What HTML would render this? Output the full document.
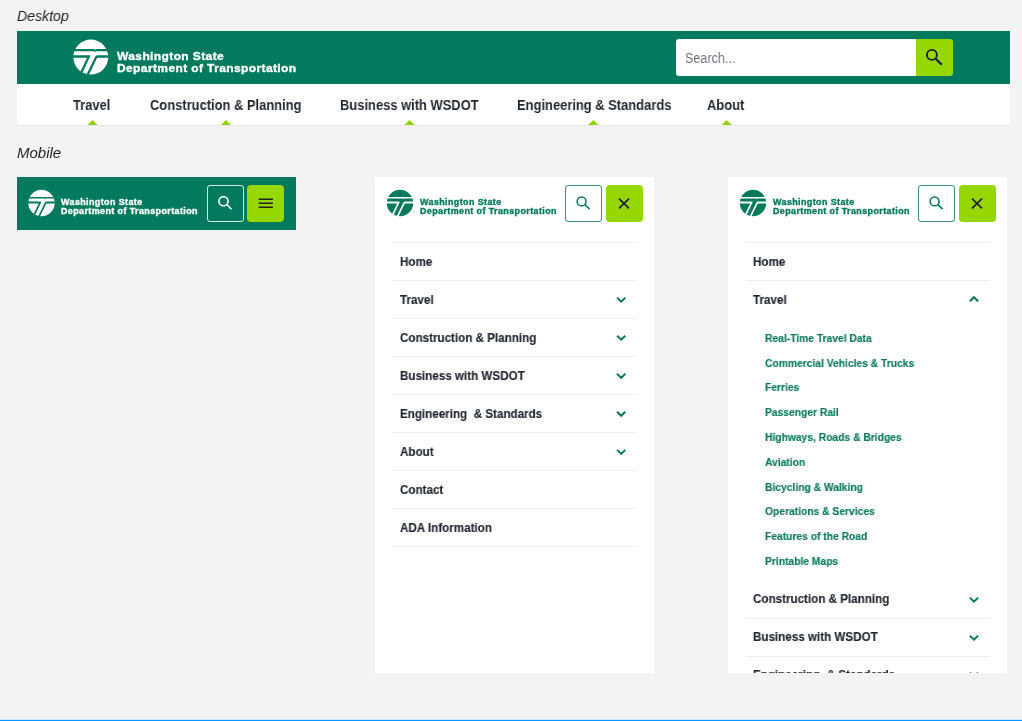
<!DOCTYPE html>
<html><head><meta charset="utf-8">
<style>
*{margin:0;padding:0;box-sizing:border-box}
html,body{width:1022px;height:721px;overflow:hidden;background:#f3f3f3;font-family:"Liberation Sans",sans-serif}
.a{position:absolute}
.t{position:absolute;white-space:nowrap}
svg{position:absolute;overflow:visible}
.t{-webkit-font-smoothing:antialiased;will-change:transform}
</style></head><body>
<div class="t" style="left:17.00px;top:7.80px;font-size:15px;line-height:15px;font-weight:normal;font-style:italic;color:#20252d;letter-spacing:0px;transform:scaleX(0.94);transform-origin:0 0;">Desktop</div>
<div class="a" style="left:17px;top:31px;width:993px;height:53px;background:#037a5e;"></div>
<div class="a" style="left:17px;top:84px;width:993px;height:41px;background:#fff;"></div>
<div class="a" style="left:17px;top:125px;width:993px;height:1px;background:#e6e6e6;"></div>
<svg style="left:71px;top:37px" width="40" height="40" viewBox="-19.800 -20.100 40.000 40.000">
 <circle cx="0" cy="0" r="17.5" fill="#fff"/>
 <g fill="#037a5e">
  <polygon points="-19,-8.1 3.6,-8.1 4.6,-7.3 5.6,-8.1 19,-8.1 19,-5.86 5.6,-5.86 4.6,-5.0 3.6,-5.86 -19,-5.86"/>
  <path d="M-19,-1.94 L-1.0,-1.94 Q-0.05,-1.94 -0.45,-1.1 L-9.89,19 L-12.43,19 L-3.76,0.56 L-19,0.56 Z"/>
  <path d="M19,-1.94 L6.8,-1.94 Q5.03,-1.94 4.3,-0.4 L-5.02,19 L-2.52,19 L6.33,0.56 L19,0.56 Z"/>
 </g>
</svg>
<div class="t" style="left:117.00px;top:50.59px;font-size:11px;line-height:11px;font-weight:bold;font-style:normal;color:#fff;letter-spacing:0.36px;transform:scaleX(1.09);transform-origin:0 0;-webkit-text-stroke:0.35px currentColor;">Washington State</div>
<div class="t" style="left:117.00px;top:63.09px;font-size:11px;line-height:11px;font-weight:bold;font-style:normal;color:#fff;letter-spacing:0.36px;transform:scaleX(1.09);transform-origin:0 0;-webkit-text-stroke:0.35px currentColor;">Department of Transportation</div>
<div class="a" style="left:676px;top:39px;width:240px;height:37px;background:#fff;border-radius:3px 0 0 3px"></div>
<div class="a" style="left:916px;top:39px;width:37px;height:37px;background:#97d700;border-radius:0 3px 3px 0"></div>
<div class="t" style="left:685.00px;top:50.85px;font-size:14px;line-height:14px;font-weight:normal;font-style:normal;color:#6e737a;letter-spacing:0px;transform:scaleX(0.9);transform-origin:0 0;">Search...</div>
<svg style="left:922px;top:45px" width="23" height="23" viewBox="922 45 23 23">
 <circle cx="931.9" cy="54.9" r="5.0" fill="none" stroke="#1d2033" stroke-width="1.9"/>
 <line x1="935.44" y1="58.44" x2="941.8" y2="64.8" stroke="#1d2033" stroke-width="2.3" stroke-linecap="butt"/>
</svg>
<div class="t" style="left:73.30px;top:98.35px;font-size:14px;line-height:14px;font-weight:bold;font-style:normal;color:#1f2630;letter-spacing:0px;transform:scaleX(0.923);transform-origin:0 0;">Travel</div>
<div class="t" style="left:149.80px;top:98.35px;font-size:14px;line-height:14px;font-weight:bold;font-style:normal;color:#1f2630;letter-spacing:0px;transform:scaleX(0.923);transform-origin:0 0;">Construction &amp; Planning</div>
<div class="t" style="left:339.80px;top:98.35px;font-size:14px;line-height:14px;font-weight:bold;font-style:normal;color:#1f2630;letter-spacing:0px;transform:scaleX(0.923);transform-origin:0 0;">Business with WSDOT</div>
<div class="t" style="left:516.70px;top:98.35px;font-size:14px;line-height:14px;font-weight:bold;font-style:normal;color:#1f2630;letter-spacing:0px;transform:scaleX(0.923);transform-origin:0 0;">Engineering &amp; Standards</div>
<div class="t" style="left:706.70px;top:98.35px;font-size:14px;line-height:14px;font-weight:bold;font-style:normal;color:#1f2630;letter-spacing:0px;transform:scaleX(0.923);transform-origin:0 0;">About</div>
<svg style="left:86px;top:119px" width="12" height="7" viewBox="86 119 12 7"><polygon points="87.5,125 92.5,120 97.5,125" fill="#8fd400"/></svg>
<svg style="left:220px;top:119px" width="12" height="7" viewBox="220 119 12 7"><polygon points="221,125 226,120 231,125" fill="#8fd400"/></svg>
<svg style="left:403px;top:119px" width="12" height="7" viewBox="403 119 12 7"><polygon points="404.5,125 409.5,120 414.5,125" fill="#8fd400"/></svg>
<svg style="left:587px;top:119px" width="12" height="7" viewBox="587 119 12 7"><polygon points="588.3,125 593.3,120 598.3,125" fill="#8fd400"/></svg>
<svg style="left:720px;top:119px" width="12" height="7" viewBox="720 119 12 7"><polygon points="721.6,125 726.6,120 731.6,125" fill="#8fd400"/></svg>
<div class="t" style="left:17.00px;top:144.80px;font-size:15px;line-height:15px;font-weight:normal;font-style:italic;color:#20252d;letter-spacing:0px;">Mobile</div>
<div class="a" style="left:17px;top:177px;width:279px;height:53px;background:#037a5e;"></div>
<svg style="left:26px;top:187px" width="31" height="31" viewBox="-20.530 -21.192 41.060 41.060">
 <circle cx="0" cy="0" r="17.5" fill="#fff"/>
 <g fill="#037a5e">
  <polygon points="-19,-8.1 3.6,-8.1 4.6,-7.3 5.6,-8.1 19,-8.1 19,-5.86 5.6,-5.86 4.6,-5.0 3.6,-5.86 -19,-5.86"/>
  <path d="M-19,-1.94 L-1.0,-1.94 Q-0.05,-1.94 -0.45,-1.1 L-9.89,19 L-12.43,19 L-3.76,0.56 L-19,0.56 Z"/>
  <path d="M19,-1.94 L6.8,-1.94 Q5.03,-1.94 4.3,-0.4 L-5.02,19 L-2.52,19 L6.33,0.56 L19,0.56 Z"/>
 </g>
</svg>
<div class="t" style="left:61.20px;top:199.16px;font-size:8.2px;line-height:8.2px;font-weight:bold;font-style:normal;color:#fff;letter-spacing:0.378px;transform:scaleX(1.09);transform-origin:0 0;-webkit-text-stroke:0.35px currentColor;">Washington State</div>
<div class="t" style="left:61.20px;top:207.86px;font-size:8.2px;line-height:8.2px;font-weight:bold;font-style:normal;color:#fff;letter-spacing:0.378px;transform:scaleX(1.09);transform-origin:0 0;-webkit-text-stroke:0.35px currentColor;">Department of Transportation</div>
<div class="a" style="left:207px;top:185px;width:37px;height:37px;background:transparent;border:1px solid rgba(255,255,255,0.85);border-radius:3px"></div>
<svg style="left:214px;top:192px" width="21" height="21" viewBox="214 192 21 21">
 <circle cx="223.5" cy="201.2" r="4.6" fill="none" stroke="#fff" stroke-width="1.6"/>
 <line x1="226.75" y1="204.45" x2="231.5" y2="209.2" stroke="#fff" stroke-width="1.6" stroke-linecap="butt"/>
</svg>
<div class="a" style="left:247px;top:185px;width:37px;height:37px;background:#97d700;border-radius:4px"></div>
<svg style="left:255px;top:195px" width="22" height="16" viewBox="255 195 22 16"><path d="M258.7,199.3H272.9M258.7,203.3H272.9M258.7,207.2H272.9" stroke="#222" stroke-width="1.5" fill="none"/></svg>
<div class="a" style="left:375px;top:177px;width:279.4px;height:496px;background:#fff;"></div>
<svg style="left:384px;top:187px" width="31" height="31" viewBox="-21.192 -21.192 41.060 41.060">
 <circle cx="0" cy="0" r="17.5" fill="#037a5e"/>
 <g fill="#fff">
  <polygon points="-19,-8.1 3.6,-8.1 4.6,-7.3 5.6,-8.1 19,-8.1 19,-5.86 5.6,-5.86 4.6,-5.0 3.6,-5.86 -19,-5.86"/>
  <path d="M-19,-1.94 L-1.0,-1.94 Q-0.05,-1.94 -0.45,-1.1 L-9.89,19 L-12.43,19 L-3.76,0.56 L-19,0.56 Z"/>
  <path d="M19,-1.94 L6.8,-1.94 Q5.03,-1.94 4.3,-0.4 L-5.02,19 L-2.52,19 L6.33,0.56 L19,0.56 Z"/>
 </g>
</svg>
<div class="t" style="left:419.50px;top:199.16px;font-size:8.2px;line-height:8.2px;font-weight:bold;font-style:normal;color:#037a5e;letter-spacing:0.378px;transform:scaleX(1.09);transform-origin:0 0;-webkit-text-stroke:0.35px currentColor;">Washington State</div>
<div class="t" style="left:419.50px;top:207.86px;font-size:8.2px;line-height:8.2px;font-weight:bold;font-style:normal;color:#037a5e;letter-spacing:0.378px;transform:scaleX(1.09);transform-origin:0 0;-webkit-text-stroke:0.35px currentColor;">Department of Transportation</div>
<div class="a" style="left:565px;top:185px;width:37px;height:37px;background:transparent;border:1px solid rgba(3,122,94,0.8);border-radius:3px"></div>
<svg style="left:573px;top:193px" width="20" height="20" viewBox="573 193 20 20">
 <circle cx="581.6" cy="201.4" r="4.4" fill="none" stroke="#037a5e" stroke-width="1.6"/>
 <line x1="584.71" y1="204.51" x2="589.7" y2="209.1" stroke="#037a5e" stroke-width="1.6" stroke-linecap="butt"/>
</svg>
<div class="a" style="left:605.5px;top:185px;width:37.5px;height:37px;background:#97d700;border-radius:4px"></div>
<svg style="left:615px;top:194px" width="20" height="20" viewBox="615 194 20 20"><path d="M619,198.6 L629,208.3 M629,198.6 L619,208.3" stroke="#1d2033" stroke-width="1.7" fill="none"/></svg>
<div class="a" style="left:393px;top:242px;width:243.5px;height:1px;background:#efefef;"></div>
<div class="t" style="left:399.60px;top:255.62px;font-size:12.5px;line-height:12.5px;font-weight:bold;font-style:normal;color:#1f2630;letter-spacing:0px;transform:scaleX(0.93);transform-origin:0 0;-webkit-text-stroke:0.15px currentColor;">Home</div>
<div class="a" style="left:393px;top:280px;width:243.5px;height:1px;background:#efefef;"></div>
<div class="t" style="left:399.60px;top:293.67px;font-size:12.5px;line-height:12.5px;font-weight:bold;font-style:normal;color:#1f2630;letter-spacing:0px;transform:scaleX(0.93);transform-origin:0 0;-webkit-text-stroke:0.15px currentColor;">Travel</div>
<svg style="left:614px;top:294px" width="14" height="10" viewBox="614 294 14 10"><polyline points="617.1,297.65 621.2,301.65 625.3000000000001,297.65" fill="none" stroke="#037a5e" stroke-width="2.0" stroke-linecap="butt" stroke-linejoin="miter"/></svg>
<div class="a" style="left:393px;top:318px;width:243.5px;height:1px;background:#efefef;"></div>
<div class="t" style="left:399.60px;top:331.72px;font-size:12.5px;line-height:12.5px;font-weight:bold;font-style:normal;color:#1f2630;letter-spacing:0px;transform:scaleX(0.93);transform-origin:0 0;-webkit-text-stroke:0.15px currentColor;">Construction &amp; Planning</div>
<svg style="left:614px;top:332px" width="14" height="10" viewBox="614 332 14 10"><polyline points="617.1,335.7 621.2,339.7 625.3000000000001,335.7" fill="none" stroke="#037a5e" stroke-width="2.0" stroke-linecap="butt" stroke-linejoin="miter"/></svg>
<div class="a" style="left:393px;top:356px;width:243.5px;height:1px;background:#efefef;"></div>
<div class="t" style="left:399.60px;top:369.77px;font-size:12.5px;line-height:12.5px;font-weight:bold;font-style:normal;color:#1f2630;letter-spacing:0px;transform:scaleX(0.93);transform-origin:0 0;-webkit-text-stroke:0.15px currentColor;">Business with WSDOT</div>
<svg style="left:614px;top:370px" width="14" height="10" viewBox="614 370 14 10"><polyline points="617.1,373.75 621.2,377.75 625.3000000000001,373.75" fill="none" stroke="#037a5e" stroke-width="2.0" stroke-linecap="butt" stroke-linejoin="miter"/></svg>
<div class="a" style="left:393px;top:394px;width:243.5px;height:1px;background:#efefef;"></div>
<div class="t" style="left:399.60px;top:407.82px;font-size:12.5px;line-height:12.5px;font-weight:bold;font-style:normal;color:#1f2630;letter-spacing:0px;transform:scaleX(0.93);transform-origin:0 0;-webkit-text-stroke:0.15px currentColor;">Engineering &nbsp;&amp; Standards</div>
<svg style="left:614px;top:408px" width="14" height="10" viewBox="614 408 14 10"><polyline points="617.1,411.8 621.2,415.8 625.3000000000001,411.8" fill="none" stroke="#037a5e" stroke-width="2.0" stroke-linecap="butt" stroke-linejoin="miter"/></svg>
<div class="a" style="left:393px;top:432px;width:243.5px;height:1px;background:#efefef;"></div>
<div class="t" style="left:399.60px;top:445.87px;font-size:12.5px;line-height:12.5px;font-weight:bold;font-style:normal;color:#1f2630;letter-spacing:0px;transform:scaleX(0.93);transform-origin:0 0;-webkit-text-stroke:0.15px currentColor;">About</div>
<svg style="left:614px;top:446px" width="14" height="10" viewBox="614 446 14 10"><polyline points="617.1,449.84999999999997 621.2,453.84999999999997 625.3000000000001,449.84999999999997" fill="none" stroke="#037a5e" stroke-width="2.0" stroke-linecap="butt" stroke-linejoin="miter"/></svg>
<div class="a" style="left:393px;top:470px;width:243.5px;height:1px;background:#efefef;"></div>
<div class="t" style="left:399.60px;top:483.92px;font-size:12.5px;line-height:12.5px;font-weight:bold;font-style:normal;color:#1f2630;letter-spacing:0px;transform:scaleX(0.93);transform-origin:0 0;-webkit-text-stroke:0.15px currentColor;">Contact</div>
<div class="a" style="left:393px;top:508px;width:243.5px;height:1px;background:#efefef;"></div>
<div class="t" style="left:399.60px;top:521.97px;font-size:12.5px;line-height:12.5px;font-weight:bold;font-style:normal;color:#1f2630;letter-spacing:0px;transform:scaleX(0.93);transform-origin:0 0;-webkit-text-stroke:0.15px currentColor;">ADA Information</div>
<div class="a" style="left:393px;top:546px;width:243.5px;height:1px;background:#efefef;"></div>
<div class="a" style="left:728px;top:177px;width:279.4px;height:496px;background:#fff;"></div>
<svg style="left:737px;top:187px" width="31" height="31" viewBox="-21.192 -21.192 41.060 41.060">
 <circle cx="0" cy="0" r="17.5" fill="#037a5e"/>
 <g fill="#fff">
  <polygon points="-19,-8.1 3.6,-8.1 4.6,-7.3 5.6,-8.1 19,-8.1 19,-5.86 5.6,-5.86 4.6,-5.0 3.6,-5.86 -19,-5.86"/>
  <path d="M-19,-1.94 L-1.0,-1.94 Q-0.05,-1.94 -0.45,-1.1 L-9.89,19 L-12.43,19 L-3.76,0.56 L-19,0.56 Z"/>
  <path d="M19,-1.94 L6.8,-1.94 Q5.03,-1.94 4.3,-0.4 L-5.02,19 L-2.52,19 L6.33,0.56 L19,0.56 Z"/>
 </g>
</svg>
<div class="t" style="left:772.50px;top:199.16px;font-size:8.2px;line-height:8.2px;font-weight:bold;font-style:normal;color:#037a5e;letter-spacing:0.378px;transform:scaleX(1.09);transform-origin:0 0;-webkit-text-stroke:0.35px currentColor;">Washington State</div>
<div class="t" style="left:772.50px;top:207.86px;font-size:8.2px;line-height:8.2px;font-weight:bold;font-style:normal;color:#037a5e;letter-spacing:0.378px;transform:scaleX(1.09);transform-origin:0 0;-webkit-text-stroke:0.35px currentColor;">Department of Transportation</div>
<div class="a" style="left:918px;top:185px;width:37px;height:37px;background:transparent;border:1px solid rgba(3,122,94,0.8);border-radius:3px"></div>
<svg style="left:926px;top:193px" width="20" height="20" viewBox="926 193 20 20">
 <circle cx="934.6" cy="201.4" r="4.4" fill="none" stroke="#037a5e" stroke-width="1.6"/>
 <line x1="937.71" y1="204.51" x2="942.7" y2="209.1" stroke="#037a5e" stroke-width="1.6" stroke-linecap="butt"/>
</svg>
<div class="a" style="left:958.5px;top:185px;width:37.5px;height:37px;background:#97d700;border-radius:4px"></div>
<svg style="left:968px;top:194px" width="20" height="20" viewBox="968 194 20 20"><path d="M972,198.6 L982,208.3 M982,198.6 L972,208.3" stroke="#1d2033" stroke-width="1.7" fill="none"/></svg>
<div class="a" style="left:746px;top:242px;width:243.5px;height:1px;background:#efefef;"></div>
<div class="t" style="left:752.60px;top:255.62px;font-size:12.5px;line-height:12.5px;font-weight:bold;font-style:normal;color:#1f2630;letter-spacing:0px;transform:scaleX(0.93);transform-origin:0 0;-webkit-text-stroke:0.15px currentColor;">Home</div>
<div class="a" style="left:746px;top:280px;width:243.5px;height:1px;background:#efefef;"></div>
<div class="t" style="left:752.60px;top:293.62px;font-size:12.5px;line-height:12.5px;font-weight:bold;font-style:normal;color:#1f2630;letter-spacing:0px;transform:scaleX(0.93);transform-origin:0 0;-webkit-text-stroke:0.15px currentColor;">Travel</div>
<svg style="left:966px;top:294px" width="14" height="10" viewBox="966 294 14 10"><polyline points="969.9,301.3 974,297.2 978.1,301.3" fill="none" stroke="#037a5e" stroke-width="2.0" stroke-linecap="butt" stroke-linejoin="miter"/></svg>
<div class="t" style="left:765.00px;top:332.84px;font-size:11px;line-height:11px;font-weight:bold;font-style:normal;color:#0b7a5f;letter-spacing:0px;transform:scaleX(0.935);transform-origin:0 0;-webkit-text-stroke:0.15px currentColor;">Real-Time Travel Data</div>
<div class="t" style="left:765.00px;top:357.62px;font-size:11px;line-height:11px;font-weight:bold;font-style:normal;color:#0b7a5f;letter-spacing:0px;transform:scaleX(0.935);transform-origin:0 0;-webkit-text-stroke:0.15px currentColor;">Commercial Vehicles &amp; Trucks</div>
<div class="t" style="left:765.00px;top:382.40px;font-size:11px;line-height:11px;font-weight:bold;font-style:normal;color:#0b7a5f;letter-spacing:0px;transform:scaleX(0.935);transform-origin:0 0;-webkit-text-stroke:0.15px currentColor;">Ferries</div>
<div class="t" style="left:765.00px;top:407.18px;font-size:11px;line-height:11px;font-weight:bold;font-style:normal;color:#0b7a5f;letter-spacing:0px;transform:scaleX(0.935);transform-origin:0 0;-webkit-text-stroke:0.15px currentColor;">Passenger Rail</div>
<div class="t" style="left:765.00px;top:431.96px;font-size:11px;line-height:11px;font-weight:bold;font-style:normal;color:#0b7a5f;letter-spacing:0px;transform:scaleX(0.935);transform-origin:0 0;-webkit-text-stroke:0.15px currentColor;">Highways, Roads &amp; Bridges</div>
<div class="t" style="left:765.00px;top:456.74px;font-size:11px;line-height:11px;font-weight:bold;font-style:normal;color:#0b7a5f;letter-spacing:0px;transform:scaleX(0.935);transform-origin:0 0;-webkit-text-stroke:0.15px currentColor;">Aviation</div>
<div class="t" style="left:765.00px;top:481.52px;font-size:11px;line-height:11px;font-weight:bold;font-style:normal;color:#0b7a5f;letter-spacing:0px;transform:scaleX(0.935);transform-origin:0 0;-webkit-text-stroke:0.15px currentColor;">Bicycling &amp; Walking</div>
<div class="t" style="left:765.00px;top:506.30px;font-size:11px;line-height:11px;font-weight:bold;font-style:normal;color:#0b7a5f;letter-spacing:0px;transform:scaleX(0.935);transform-origin:0 0;-webkit-text-stroke:0.15px currentColor;">Operations &amp; Services</div>
<div class="t" style="left:765.00px;top:531.08px;font-size:11px;line-height:11px;font-weight:bold;font-style:normal;color:#0b7a5f;letter-spacing:0px;transform:scaleX(0.935);transform-origin:0 0;-webkit-text-stroke:0.15px currentColor;">Features of the Road</div>
<div class="t" style="left:765.00px;top:555.86px;font-size:11px;line-height:11px;font-weight:bold;font-style:normal;color:#0b7a5f;letter-spacing:0px;transform:scaleX(0.935);transform-origin:0 0;-webkit-text-stroke:0.15px currentColor;">Printable Maps</div>
<div class="a" style="left:728px;top:580px;width:279.4px;height:93px;overflow:hidden">
<div class="t" style="left:24.60px;top:13.22px;font-size:12.5px;line-height:12.5px;font-weight:bold;font-style:normal;color:#1f2630;letter-spacing:0px;transform:scaleX(0.93);transform-origin:0 0;-webkit-text-stroke:0.15px currentColor;">Construction &amp; Planning</div>
<svg style="left:238px;top:14px" width="14" height="10" viewBox="238 14 14 10"><polyline points="241.9,17.599999999999955 246,21.599999999999955 250.1,17.599999999999955" fill="none" stroke="#037a5e" stroke-width="2.0" stroke-linecap="butt" stroke-linejoin="miter"/></svg>
<div class="a" style="left:18px;top:38px;width:243.5px;height:1px;background:#efefef;"></div>
<div class="t" style="left:24.60px;top:51.27px;font-size:12.5px;line-height:12.5px;font-weight:bold;font-style:normal;color:#1f2630;letter-spacing:0px;transform:scaleX(0.93);transform-origin:0 0;-webkit-text-stroke:0.15px currentColor;">Business with WSDOT</div>
<svg style="left:238px;top:52px" width="14" height="10" viewBox="238 52 14 10"><polyline points="241.9,55.649999999999906 246,59.649999999999906 250.1,55.649999999999906" fill="none" stroke="#037a5e" stroke-width="2.0" stroke-linecap="butt" stroke-linejoin="miter"/></svg>
<div class="a" style="left:18px;top:76px;width:243.5px;height:1px;background:#efefef;"></div>
<div class="t" style="left:24.60px;top:89.32px;font-size:12.5px;line-height:12.5px;font-weight:bold;font-style:normal;color:#1f2630;letter-spacing:0px;transform:scaleX(0.93);transform-origin:0 0;-webkit-text-stroke:0.15px currentColor;">Engineering &nbsp;&amp; Standards</div>
<svg style="left:238px;top:89px" width="14" height="10" viewBox="238 89 14 10"><polyline points="241.9,92.69999999999997 246,96.69999999999997 250.1,92.69999999999997" fill="none" stroke="#037a5e" stroke-width="2.0" stroke-linecap="butt" stroke-linejoin="miter"/></svg>
<div class="a" style="left:18px;top:114px;width:243.5px;height:1px;background:#efefef;"></div>
</div>
<div class="a" style="left:0px;top:719px;width:1022px;height:1px;background:#cfe8ff;"></div>
<div class="a" style="left:0px;top:720px;width:1022px;height:1px;background:#0a94ff;"></div>
</body></html>
